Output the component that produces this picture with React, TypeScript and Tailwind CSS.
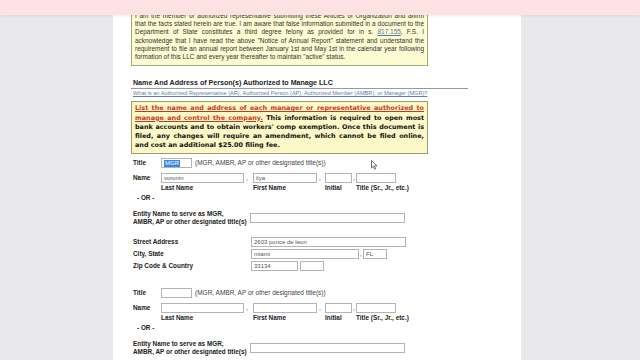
import React from "react";

const inp = "h-[10px] border border-[#b4b4b4] bg-white text-[6px] leading-[8px] px-[2px] text-[#555] box-border";

function Label({ children, w }: { children: React.ReactNode; w: string }) {
  return <div className={`${w} font-bold text-[6.4px] text-[#222] leading-[8px]`}>{children}</div>;
}

function PersonBlock({ title, last, first }: { title?: boolean; last?: string; first?: string }) {
  return (
    <div className="flex flex-col">
      <div className="flex items-center h-[11px]">
        <Label w="w-[28px]">Title</Label>
        <div className={`${inp} w-[31px] flex items-center`}>
          {title ? <span className="bg-[#3a86e6] text-white px-[1px] leading-[7px]">MGR</span> : null}
        </div>
        <span className="ml-[3px] text-[6.5px] text-[#444]">(MGR, AMBR, AP or other designated title(s))</span>
      </div>
      <div className="flex items-center h-[10px] mt-[4px]">
        <Label w="w-[28px]">Name</Label>
        <div className={`${inp} w-[83px]`}>{last}</div>
        <span className="w-[9px] text-[6.5px] text-[#444] pl-[2px]">,</span>
        <div className={`${inp} w-[64px]`}>{first}</div>
        <span className="w-[8px] text-[6.5px] text-[#444] pl-[2px]">,</span>
        <div className={`${inp} w-[27px]`}></div>
        <span className="w-[4px] text-[6.5px] text-[#444] pl-[1px]">,</span>
        <div className={`${inp} w-[40px]`}></div>
      </div>
      <div className="flex items-center h-[9px] mt-[1px] font-bold text-[6.4px] text-[#222]">
        <div className="w-[28px]"></div>
        <div className="w-[92px]">Last Name</div>
        <div className="w-[72px]">First Name</div>
        <div className="w-[31px]">Initial</div>
        <div>Title (Sr., Jr., etc.)</div>
      </div>
      <div className="h-[9px] pl-[4px] font-bold text-[6.4px] text-[#222] leading-[9px]">- OR -</div>
      <div className="flex items-center mt-[8px]">
        <div className="w-[117px] font-bold text-[6.4px] text-[#222] leading-[8px]">
          Entity Name to serve as MGR,<br />AMBR, AP or other designated title(s)
        </div>
        <div className={`${inp} w-[155px]`}></div>
      </div>
    </div>
  );
}

export default function App() {
  return (
    <div className="w-[640px] h-[360px] overflow-hidden relative bg-[#e9e8ea] flex" style={{ fontFamily: '"Liberation Sans", Arial, sans-serif' }}>
      <div className="w-[113px] shrink-0"></div>
      <div className="w-[408px] shrink-0 bg-white pl-[18px] pr-[93px] flex flex-col">
        <div className="mt-[8px] w-[297px] border border-[#a8a67e] bg-[#fdfbd2] px-[3px] pt-[3px] pb-[4px] text-[6.45px] leading-[8.2px] text-[#333] text-justify">
          I am the member or authorized representative submitting these Articles of Organization and affirm that the facts stated herein are true. I am aware that false information submitted in a document to the Department of State constitutes a third degree felony as provided for in s. <span className="text-[#5577aa] underline">817.155</span>, F.S. I acknowledge that I have read the above "Notice of Annual Report" statement and understand the requirement to file an annual report between January 1st and May 1st in the calendar year following formation of this LLC and every year thereafter to maintain "active" status.
        </div>
        <div className="mt-[13px] w-[337px] border-b border-[#9a9a9a] font-bold text-[7.1px] leading-[9px] text-[#222] pl-[2px]">
          Name And Address of Person(s) Authorized to Manage LLC
        </div>
        <div className="pl-[2px] mt-[1px] text-[5.6px] leading-[7px] text-[#5b7fb0] underline whitespace-nowrap">
          What is an Authorized Representative (AR), Authorized Person (AP), Authorized Member (AMBR), or Manager (MGR)?
        </div>
        <div className="mt-[4px] w-[297px] border border-[#a09a6a] bg-[#fdf8c8] px-[3px] py-[2px] text-[6.45px] leading-[9.3px] font-bold text-[#111] text-justify" style={{ fontFamily: '"DejaVu Sans", Verdana, sans-serif' }}>
          <span className="text-[#c8381c] underline">List the name and address of each manager or representative authorized to manage and control the company.</span> This information is required to open most bank accounts and to obtain workers' comp exemption. Once this document is filed, any changes will require an amendment, which cannot be filed online, and cost an additional $25.00 filing fee.
        </div>
        <div className="mt-[4px] pl-[2px] flex flex-col">
          <PersonBlock title last="voronin" first="ilya" />
          <div className="flex flex-col mt-[11px] gap-[2px]">
            <div className="flex items-center h-[10px]">
              <Label w="w-[118px]">Street Address</Label>
              <div className={`${inp} w-[155px]`}>2603 ponce de leon</div>
            </div>
            <div className="flex items-center h-[10px]">
              <Label w="w-[118px]">City, State</Label>
              <div className={`${inp} w-[108px]`}>miami</div>
              <span className="w-[4px] text-[6.5px] text-[#444] pl-[1px]">,</span>
              <div className={`${inp} w-[24px]`}>FL</div>
            </div>
            <div className="flex items-center h-[10px]">
              <Label w="w-[118px]">Zip Code &amp; Country</Label>
              <div className={`${inp} w-[47px]`}>33134</div>
              <div className={`${inp} w-[24px] ml-[2px]`}></div>
            </div>
          </div>
          <div className="mt-[17px]">
            <PersonBlock />
          </div>
        </div>
      </div>
      <div className="flex-1"></div>
      <div className="absolute top-0 left-0 w-[640px] h-[15px] bg-[#fde1e3] shadow-[0_1px_2px_rgba(0,0,0,0.08)]"></div>
      <svg className="absolute left-[371px] top-[160px]" width="7" height="10" viewBox="0 0 7 10">
        <path d="M0.5 0.5 L0.5 8 L2.3 6.3 L3.6 9.2 L4.7 8.7 L3.4 5.9 L6 5.9 Z" fill="white" stroke="#333" strokeWidth="0.7" />
      </svg>
    </div>
  );
}
